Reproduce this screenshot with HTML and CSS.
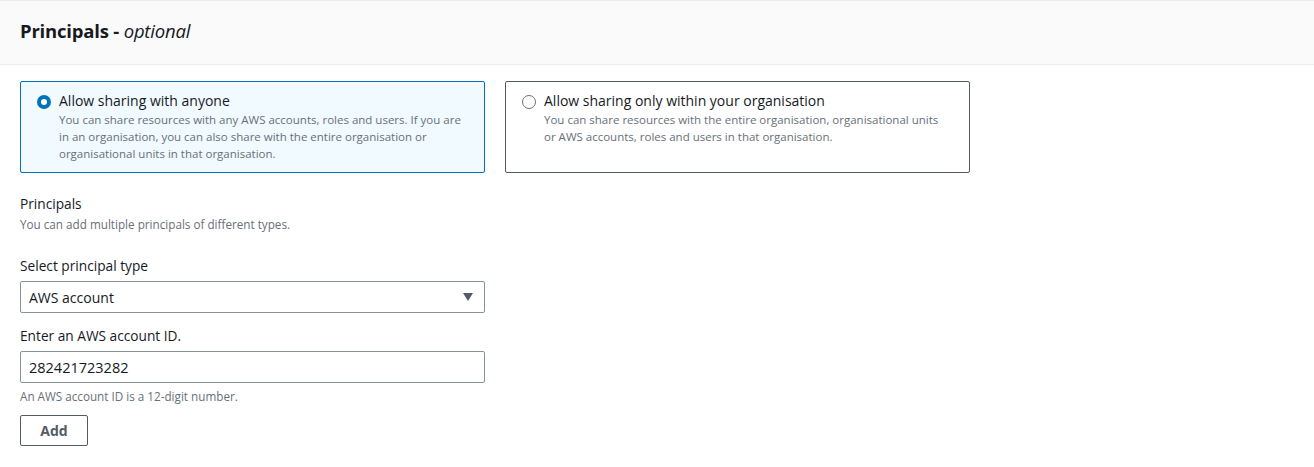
FILE: index.html
```html
<!DOCTYPE html>
<html lang="en">
<head>
    <meta charset="UTF-8">
    <title>Principals</title>
    <link rel="stylesheet" href="styles.css">
</head>
<body>
    <!-- Section header -->
    <div class="panel-header">
        <h2>Principals - <i>optional</i></h2>
    </div>

    <div class="panel-body">
        <div class="tiles">
            <label class="tile selected">
                <span class="radio checked"></span>
                <span class="tile-text">
                    <span class="tile-title">Allow sharing with anyone</span>
                    <span class="tile-desc">You can share resources with any AWS accounts, roles and users. If you are in an organisation, you can also share with the entire organisation or organisational units in that organisation.</span>
                </span>
            </label>
            <label class="tile">
                <span class="radio"></span>
                <span class="tile-text">
                    <span class="tile-title">Allow sharing only within your organisation</span>
                    <span class="tile-desc">You can share resources with the entire organisation, organisational units or AWS accounts, roles and users in that organisation.</span>
                </span>
            </label>
        </div>

        <div class="field">
            <div class="label">Principals</div>
            <div class="desc">You can add multiple principals of different types.</div>
        </div>

        <div class="field">
            <div class="label">Select principal type</div>
            <div class="select">
                <span>AWS account</span>
                <span class="caret"></span>
            </div>
        </div>

        <div class="field tight">
            <div class="label">Enter an AWS account ID.</div>
            <div class="input">282421723282</div>
            <div class="hint">An AWS account ID is a 12-digit number.</div>
        </div>

        <button class="btn">Add</button>
    </div>
</body>
</html>
```

FILE: styles.css
```css
html, body {
    margin: 0;
    padding: 0;
    background-color: white;
}

body {
    font-family: "Open Sans", "Noto Sans", Arial, sans-serif;
    color: #16191f;
}

.panel-header {
    background-color: #fafafa;
    border-top: 1px solid #eaeded;
    border-bottom: 1px solid #eaeded;
    height: 63px;
    padding: 0 20px;
    display: flex;
    align-items: center;
}

.panel-header h2 {
    margin: 0 0 4px;
    font-size: 18.5px;
    font-weight: 700;
    letter-spacing: -0.2px;
}

.panel-header i {
    font-weight: 400;
}

.panel-body {
    padding: 16px 20px;
}

.tiles {
    display: flex;
    gap: 20px;
}

.tile {
    box-sizing: border-box;
    width: 465px;
    height: 92px;
    border: 1px solid #545b64;
    border-radius: 2px;
    padding: 9px 20px 10px 16px;
    display: flex;
    gap: 8px;
}

.tile.selected {
    border-color: #0073bb;
    background-color: #f1faff;
}

.radio {
    box-sizing: border-box;
    flex: none;
    width: 14px;
    height: 14px;
    margin-top: 4px;
    border-radius: 50%;
    border: 1px solid #687078;
    background: white;
}

.radio.checked {
    border: 4px solid #0073bb;
}

.tile-text {
    display: flex;
    flex-direction: column;
}

.tile-title {
    font-size: 14px;
    line-height: 20px;
}

.tile-desc {
    font-size: 11.5px;
    line-height: 17px;
    color: #687078;
}

.field {
    margin-top: 20px;
}

.field + .field {
    margin-top: 22px;
}

.field.tight {
    margin-top: 12px;
}

.label {
    font-size: 13.7px;
    line-height: 22px;
}

.desc, .hint {
    font-size: 11.7px;
    line-height: 18px;
    color: #687078;
}

.hint {
    margin-top: 4px;
}

.select, .input {
    box-sizing: border-box;
    width: 465px;
    height: 32px;
    border: 1px solid #879596;
    border-radius: 2px;
    padding: 0 8px;
    font-size: 14px;
    display: flex;
    align-items: center;
    margin-top: 4px;
}

.select {
    justify-content: space-between;
}

.input {
    font-size: 14.5px;
}

.caret {
    width: 0;
    height: 0;
    border-left: 5px solid transparent;
    border-right: 5px solid transparent;
    border-top: 8px solid #545b64;
    margin-right: 3px;
}

.btn {
    margin-top: 10px;
    width: 68px;
    height: 31px;
    background: white;
    border: 1px solid #545b64;
    border-radius: 2px;
    font-family: inherit;
    font-size: 14px;
    font-weight: 700;
    color: #545b64;
}
```
